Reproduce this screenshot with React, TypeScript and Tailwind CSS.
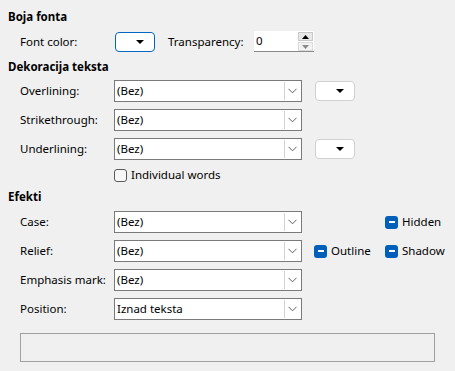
import React from 'react';

const font = { fontFamily: '"Noto Sans", "Open Sans", sans-serif' };

function Chevron() {
  return (
    <svg width="9" height="6" viewBox="0 0 9 6" className="text-[#5f5f5f]">
      <path d="M0.5 0.8 L4.5 4.8 L8.5 0.8" fill="none" stroke="currentColor" strokeWidth="1" />
    </svg>
  );
}

function Combo({ value }: { value: string }) {
  return (
    <div className="flex h-[22px] w-[188px] shrink-0 items-stretch border border-[#7a7a7a] bg-white">
      <div className="flex flex-1 items-center pl-[2px] text-[11.5px] text-black">{value}</div>
      <div className="m-[1px] flex w-[16px] items-center justify-center border-l border-[#d2d2d2] bg-white">
        <Chevron />
      </div>
    </div>
  );
}

function ColorButton({ focused }: { focused?: boolean }) {
  return (
    <div
      className={`flex h-[20px] w-[40px] shrink-0 items-center justify-end rounded-[4px] border bg-white pr-[10px] ${
        focused ? 'border-[#0067c0]' : 'border-[#d0d0d0]'
      }`}
    >
      <svg width="8" height="4" viewBox="0 0 8 4">
        <path d="M0 0 H8 L4 4 Z" fill="#000" />
      </svg>
    </div>
  );
}

function Tri() {
  return (
    <div className="flex h-[13px] w-[13px] shrink-0 items-center justify-center rounded-[3px] bg-[#005fb8]">
      <div className="h-[1.5px] w-[6px] bg-white" />
    </div>
  );
}

function Row({ label, children }: { label: string; children: React.ReactNode }) {
  return (
    <div className="flex h-[22px] items-center whitespace-nowrap">
      <div className="w-[106px] shrink-0 pl-[12px] text-[11.5px] text-black">{label}</div>
      {children}
    </div>
  );
}

export default function App() {
  return (
    <div className="h-[371px] w-[455px] overflow-hidden whitespace-nowrap bg-[#f0f0f0] px-2 text-black" style={font}>
      <div className="mt-[9px] flex h-[16px] items-center text-[11.5px] font-bold">Boja fonta</div>

      <div className="mt-[6px] flex h-[21px] items-center">
        <div className="w-[107px] shrink-0 pl-[12px] text-[11.5px]">Font color:</div>
        <ColorButton focused />
        <div className="ml-[13px] w-[86px] shrink-0 text-[11.5px]">Transparency:</div>
        <div className="flex h-[21px] w-[60px] shrink-0 items-stretch border-b border-[#8a8a8a] bg-white">
          <div className="flex flex-1 items-center pl-[2px] text-[11.5px]">0</div>
          <div className="mr-[1px] mt-[1px] flex w-[15px] flex-col gap-[1px]">
            <div className="flex h-[9px] items-center justify-center border border-[#c8c8c8] bg-[#e8e8e8]">
              <svg width="7" height="4" viewBox="0 0 7 4">
                <path d="M0 4 H7 L3.5 0 Z" fill="#000" />
              </svg>
            </div>
            <div className="flex h-[9px] items-center justify-center border border-[#dcdcdc] bg-[#f2f2f2]">
              <svg width="7" height="4" viewBox="0 0 7 4">
                <path d="M0 0 H7 L3.5 4 Z" fill="#8a8a8a" />
              </svg>
            </div>
          </div>
        </div>
      </div>

      <div className="mt-[7px] flex h-[16px] items-center text-[11.5px] font-bold">Dekoracija teksta</div>

      <div className="mt-[5px] flex flex-col gap-[7px]">
        <Row label="Overlining:">
          <Combo value="(Bez)" />
          <div className="ml-[13px]">
            <ColorButton />
          </div>
        </Row>
        <Row label="Strikethrough:">
          <Combo value="(Bez)" />
        </Row>
        <Row label="Underlining:">
          <Combo value="(Bez)" />
          <div className="ml-[13px]">
            <ColorButton />
          </div>
        </Row>
      </div>

      <div className="mt-[8px] flex h-[14px] items-center pl-[106px]">
        <div className="h-[13px] w-[13px] shrink-0 rounded-[3px] border border-[#5a5a5a] bg-[#f7f7f7]" />
        <span className="ml-[4px] text-[11.5px]">Individual words</span>
      </div>

      <div className="mt-[7px] flex h-[16px] items-center text-[11.5px] font-bold">Efekti</div>

      <div className="mt-[6px] flex flex-col gap-[7px]">
        <Row label="Case:">
          <Combo value="(Bez)" />
          <div className="ml-[83px] flex items-center">
            <Tri />
            <span className="ml-[4px] text-[11.5px]">Hidden</span>
          </div>
        </Row>
        <Row label="Relief:">
          <Combo value="(Bez)" />
          <div className="ml-[12px] flex w-[71px] shrink-0 items-center">
            <Tri />
            <span className="ml-[4px] text-[11.5px]">Outline</span>
          </div>
          <div className="flex items-center">
            <Tri />
            <span className="ml-[4px] text-[11.5px]">Shadow</span>
          </div>
        </Row>
        <Row label="Emphasis mark:">
          <Combo value="(Bez)" />
        </Row>
        <Row label="Position:">
          <Combo value="Iznad teksta" />
        </Row>
      </div>

      <div className="ml-[12px] mt-[13px] h-[29px] w-[415px] border border-[#a0a0a0] bg-[#f0f0f0]" />
    </div>
  );
}
